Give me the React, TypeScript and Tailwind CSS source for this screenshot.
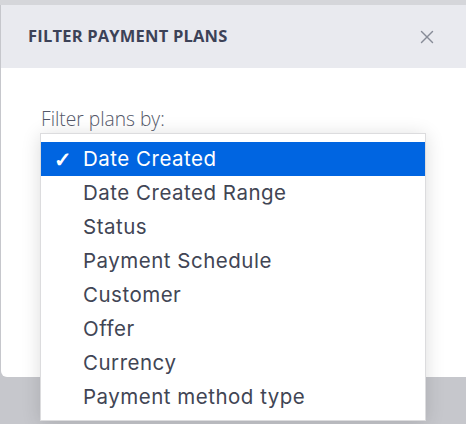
import { X } from "lucide-react";

const options = [
  "Date Created",
  "Date Created Range",
  "Status",
  "Payment Schedule",
  "Customer",
  "Offer",
  "Currency",
  "Payment method type",
];

export default function App() {
  return (
    <div className="relative w-[466px] h-[424px] overflow-hidden bg-[#c6c7cc] flex flex-col">
      <div className="h-[5px] bg-[#d5d6da] shrink-0" />
      <div className="flex">
        <div className="w-px bg-[#c6c7cc] shrink-0" />
        <div className="flex-1 bg-white rounded-bl-[6px] h-[372px] flex flex-col">
          <div className="h-[63px] bg-[#e9eaef] flex items-center justify-between pl-[27px] pr-[28px] shrink-0">
            <h2 className="text-[16.5px] font-bold tracking-[0.2px] text-[#3c4257] font-['Open_Sans',sans-serif]">
              FILTER PAYMENT PLANS
            </h2>
            <X size={22} strokeWidth={1.5} className="text-[#878b97]" />
          </div>
          <div className="pl-[40px] pt-[38px]">
            <p className="text-[19.2px] font-light text-[#545869] font-['Open_Sans',sans-serif] leading-[26px]">
              Filter plans by:
            </p>
          </div>
        </div>
      </div>

      <div className="absolute left-[40px] top-[133px] w-[386px] bg-white border border-[#dcdcde] shadow-[0_2px_18px_rgba(0,0,0,0.14)] pt-[8px] pb-[6px]">
        {options.map((o, i) => (
          <div
            key={o}
            className={
              i === 0
                ? "h-[34px] flex items-center bg-[#0065e1] text-white"
                : "h-[34px] flex items-center text-[#414554]"
            }
          >
            <span className="w-[42px] pl-[13px] text-[21px] font-semibold leading-none">{i === 0 ? "✓" : ""}</span>
            <span className="text-[20.5px] font-['Inter',sans-serif] tracking-[0.5px]">{o}</span>
          </div>
        ))}
      </div>
    </div>
  );
}
